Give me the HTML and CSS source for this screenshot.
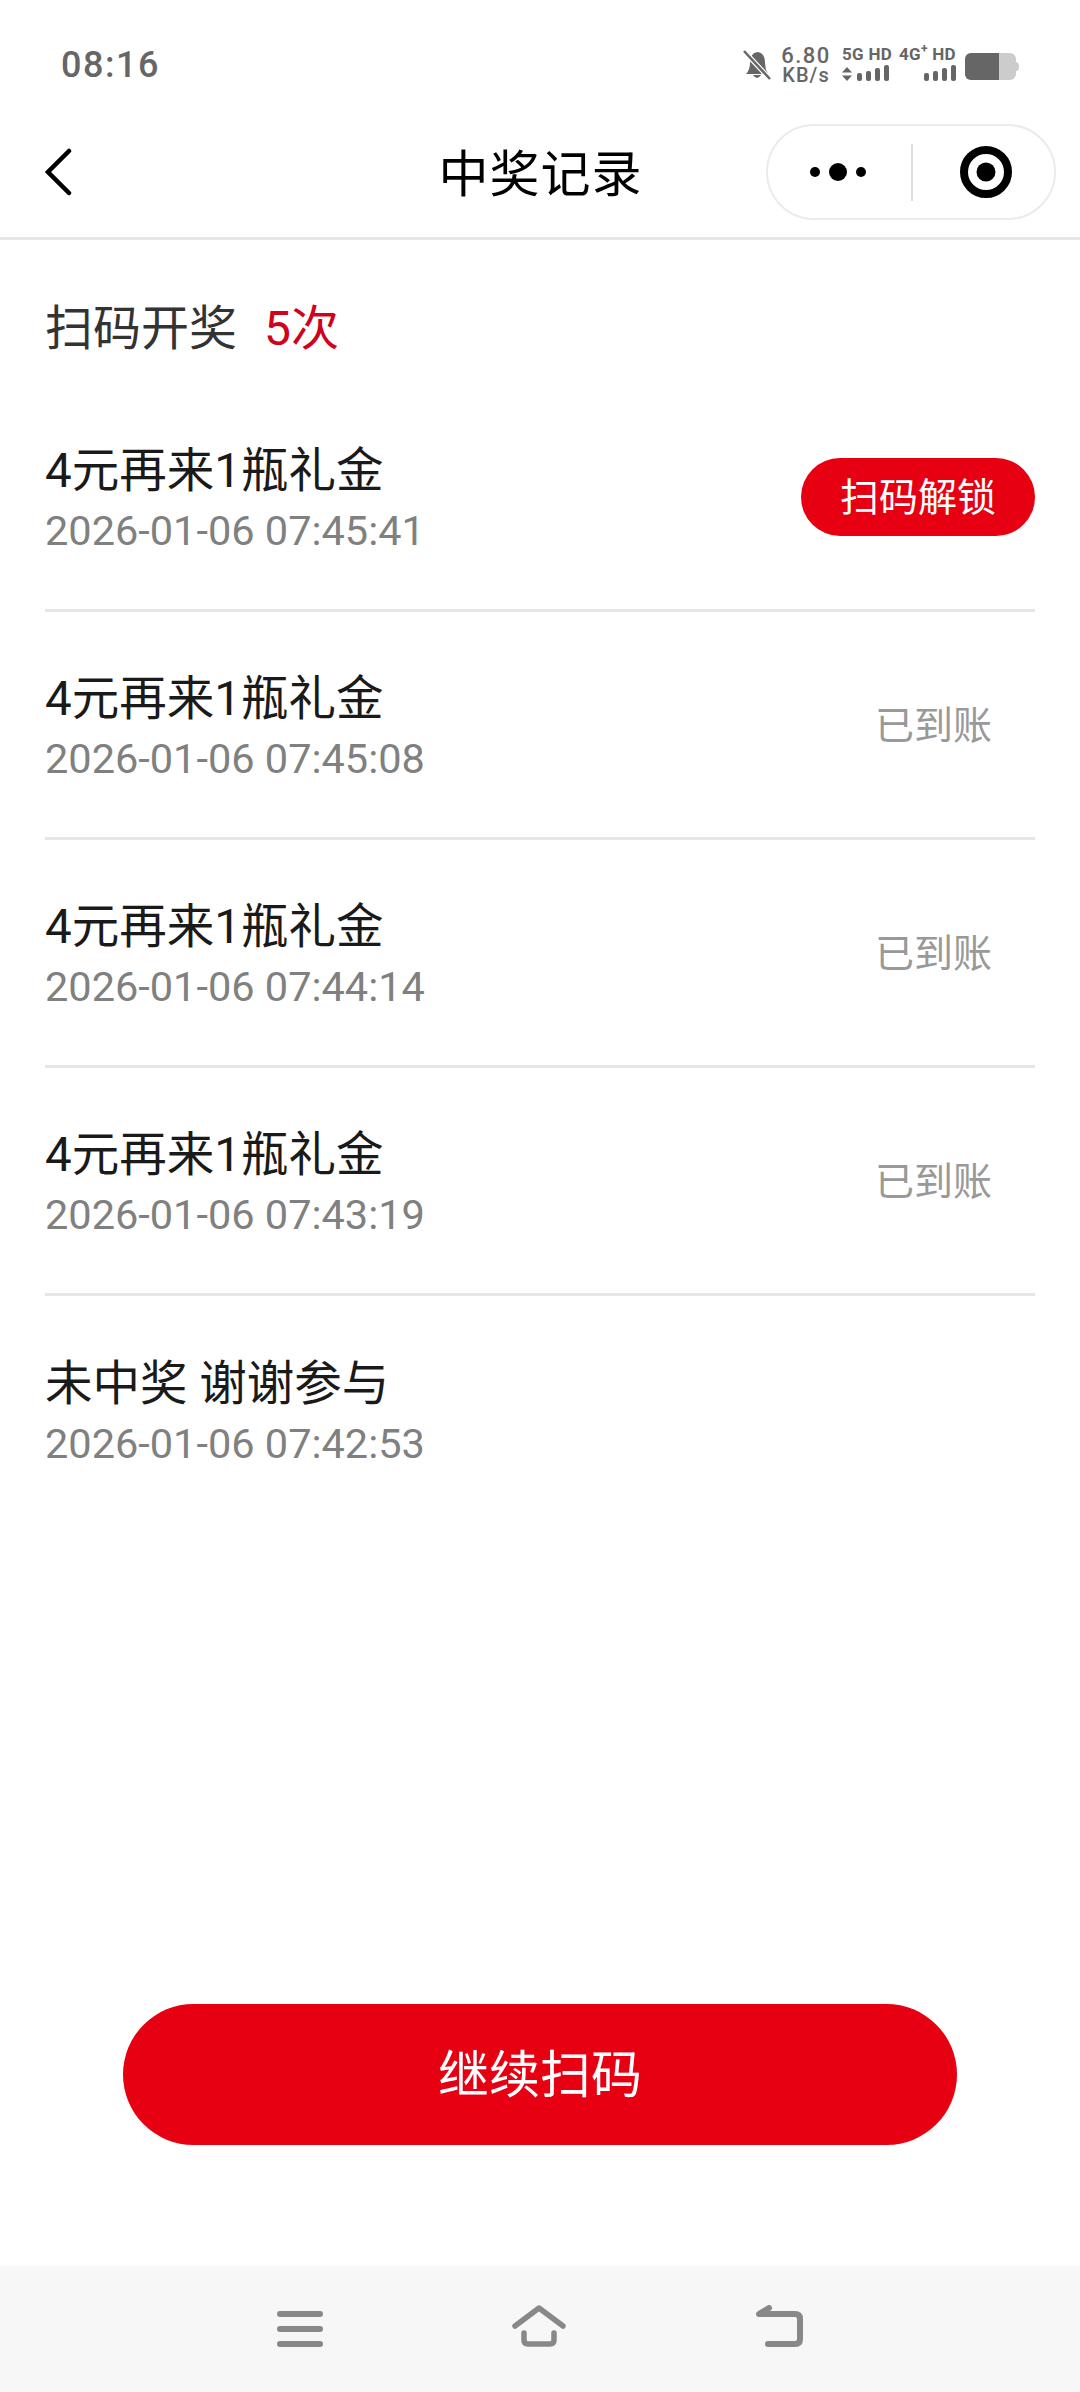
FILE: index.html
```html
<!DOCTYPE html>
<html lang="zh">
<head>
    <title>中奖记录</title>
    <meta charset="utf-8">
    <meta name="viewport" content="width=device-width, initial-scale=1.0">
    <link rel="stylesheet" href="styles.css">
</head>
<body>
    <div class="status-bar">
        <span class="status-time">08:16</span>
        <div class="status-icons">
            <svg class="icon-bell" width="28" height="32" viewBox="0 0 28 32">
                <path d="M3 25 Q7 21 7 14 Q7 4 14.500 3 Q22 4 22 14 Q22 20 25 25 Z" fill="#666"/>
                <path d="M10 26 Q14 32 18 26 Z" fill="#666"/>
                <path d="M0 1 L26 29" stroke="#fff" stroke-width="5"/>
                <path d="M1 2 L27 30" stroke="#666" stroke-width="2.500"/>
            </svg>
            <div class="net-speed">
                <span class="net-speed-num">6.80</span>
                <span class="net-speed-unit">KB/s</span>
            </div>
            <div class="sim sim-first">
                <span class="sim-label">5G HD</span>
                <div class="sim-signal">
                    <svg width="10" height="14" viewBox="0 0 10 14">
                        <path d="M5 0 L10 5.500 L0 5.500 Z M5 14 L10 8.500 L0 8.500 Z" fill="#666"/>
                    </svg>
                    <i class="bar bar-1"></i><i class="bar bar-2"></i><i class="bar bar-3"></i><i class="bar bar-4"></i>
                </div>
            </div>
            <div class="sim sim-second">
                <span class="sim-label">4G<sup>+</sup> HD</span>
                <div class="sim-signal">
                    <i class="bar bar-1"></i><i class="bar bar-2"></i><i class="bar bar-3"></i><i class="bar bar-4"></i>
                </div>
            </div>
            <svg class="icon-battery" width="55" height="28" viewBox="0 0 55 28">
                <rect x="0" y="0" width="51" height="27" rx="6" fill="#ccc"/>
                <path d="M6 0 H34 V27 H6 A6 6 0 0 1 0 21 V6 A6 6 0 0 1 6 0 Z" fill="#666"/>
                <path d="M51 9 Q54 9 54 13.500 Q54 18 51 18 Z" fill="#ccc"/>
            </svg>
        </div>
    </div>

    <div class="nav-bar">
        <div class="nav-back">
            <svg width="28" height="48" viewBox="0 0 28 48">
                <path d="M24 3 L3 24 L24 45" fill="none" stroke="#000" stroke-width="4.500" stroke-linecap="round"/>
            </svg>
        </div>
        <h1 class="nav-title">中奖记录</h1>
        <div class="capsule">
            <div class="capsule-more">
                <i class="dot"></i><i class="dot dot-big"></i><i class="dot"></i>
            </div>
            <div class="capsule-close">
                <svg width="52" height="52" viewBox="0 0 52 52">
                    <circle cx="26" cy="26" r="22" fill="none" stroke="#000" stroke-width="8"/>
                    <circle cx="26" cy="26" r="9.500" fill="#000"/>
                </svg>
            </div>
        </div>
    </div>

    <div class="content">
        <div class="summary">扫码开奖<span class="summary-count">5次</span></div>

        <div class="record">
            <div class="record-info">
                <div class="record-name">4元再来1瓶礼金</div>
                <div class="record-time">2026-01-06 07:45:41</div>
            </div>
            <div class="unlock-btn">扫码解锁</div>
        </div>
        <div class="record">
            <div class="record-info">
                <div class="record-name">4元再来1瓶礼金</div>
                <div class="record-time">2026-01-06 07:45:08</div>
            </div>
            <div class="record-state">已到账</div>
        </div>
        <div class="record">
            <div class="record-info">
                <div class="record-name">4元再来1瓶礼金</div>
                <div class="record-time">2026-01-06 07:44:14</div>
            </div>
            <div class="record-state">已到账</div>
        </div>
        <div class="record">
            <div class="record-info">
                <div class="record-name">4元再来1瓶礼金</div>
                <div class="record-time">2026-01-06 07:43:19</div>
            </div>
            <div class="record-state">已到账</div>
        </div>
        <div class="record">
            <div class="record-info">
                <div class="record-name">未中奖 谢谢参与</div>
                <div class="record-time">2026-01-06 07:42:53</div>
            </div>
        </div>
    </div>

    <div class="footer">
        <div class="continue-btn">继续扫码</div>
    </div>

    <div class="system-nav">
        <svg width="46" height="38" viewBox="0 0 46 38">
            <path d="M3 4 H43 M3 19 H43 M3 34 H43" stroke="#888" stroke-width="6" stroke-linecap="round"/>
        </svg>
        <svg class="system-nav-raised" width="54" height="42" viewBox="0 0 54 42">
            <path d="M3 21 L27 3 L51 21" fill="none" stroke="#888" stroke-width="5.500" stroke-linecap="round" stroke-linejoin="round"/>
            <path d="M12 28 V35 Q12 39 16 39 H38 Q42 39 42 35 V28" fill="none" stroke="#888" stroke-width="5.500" stroke-linecap="round"/>
        </svg>
        <svg class="system-nav-raised" width="48" height="42" viewBox="0 0 48 42">
            <path d="M13 39 H40 Q45 39 45 34 V14 Q45 9 40 9 H4 L14 3" fill="none" stroke="#888" stroke-width="6" stroke-linecap="round" stroke-linejoin="round"/>
        </svg>
    </div>
</body>
</html>
```

FILE: styles.css
```css
* { box-sizing: border-box; }
html, body { margin: 0; padding: 0; }
body { width: 1080px; height: 2392px; display: flex; flex-direction: column; background: #fff; color: #1a1a1a; font-family: "Roboto", "Noto Sans CJK SC", sans-serif; overflow: hidden; }

.status-bar { height: 124px; display: flex; justify-content: space-between; align-items: flex-start; padding: 44px 60px 0 61px; }
.status-time { font-size: 36px; line-height: 42px; font-weight: 500; color: #666; letter-spacing: 1.500px; }
.status-icons { display: flex; align-items: flex-start; color: #666; margin-top: 3px; }
.icon-bell { margin-right: 10px; margin-top: 2px; }
.net-speed { display: flex; flex-direction: column; align-items: center; width: 50px; margin-right: 11px; margin-top: -2px; }
.net-speed-num { font-size: 22px; line-height: 21px; font-weight: 500; letter-spacing: 1.500px; }
.net-speed-unit { font-size: 20px; line-height: 18px; font-weight: 500; letter-spacing: 1px; }
.sim { display: flex; flex-direction: column; margin-top: -2px; }
.sim-first { width: 47px; margin-right: 10px; }
.sim-second { width: 57px; margin-right: 9px; }
.sim-label { font-size: 17px; line-height: 18px; font-weight: 700; white-space: nowrap; letter-spacing: .3px; }
.sim-label sup { font-size: 12px; line-height: 0; }
.sim-signal { display: flex; align-items: flex-end; justify-content: flex-end; gap: 4px; height: 16px; margin-top: 2px; }
.sim-signal svg { margin-right: 1px; }
.bar { display: block; width: 5px; background: #666; border-radius: 2px; }
.bar-1 { height: 8px; }
.bar-2 { height: 10px; }
.bar-3 { height: 13px; }
.bar-4 { height: 16px; }
.icon-battery { margin-top: 6px; }

.nav-bar { height: 116px; flex-shrink: 0; display: grid; grid-template-columns: 1fr auto 1fr; align-items: center; border-bottom: 3px solid #e6e6e6; padding: 0 24px 17px 25px; }
.nav-back { display: flex; align-items: center; padding-left: 20px; }
.nav-title { margin: 5px 0 0; font-size: 50px; line-height: 60px; font-weight: 400; color: #000; letter-spacing: 1px; }
.capsule { justify-self: end; width: 290px; height: 96px; display: flex; align-items: center; border: 2px solid #ebebeb; border-radius: 48px; }
.capsule-more { width: 145px; height: 57px; display: flex; align-items: center; justify-content: flex-end; gap: 9px; padding-right: 45px; border-right: 2px solid #ddd; }
.dot { display: block; width: 10px; height: 10px; background: #000; border-radius: 50%; }
.dot-big { width: 18px; height: 18px; }
.capsule-close { flex: 1; display: flex; justify-content: center; padding-left: 5px; }

.content { flex: 1; padding: 0 45px; }
.summary { font-size: 48px; line-height: 60px; color: #333; margin-top: 59px; margin-bottom: 25px; }
.summary-count { color: #d0021b; margin-left: 27px; }

.record { height: 228px; display: flex; align-items: center; justify-content: space-between; border-bottom: 3px solid #e6e6e6; }
.record:last-child { border-bottom: 0; }
.record-info { padding-top: 5px; }
.record-name { font-size: 47.500px; line-height: 58px; color: #1a1a1a; }
.record-time { font-size: 41.500px; line-height: 52px; color: #808080; margin-top: 5px; }
.unlock-btn { width: 234px; height: 78px; display: flex; align-items: center; justify-content: center; padding-bottom: 5px; background: #e60012; color: #fff; font-size: 39px; border-radius: 39px; }
.record-state { width: 190px; text-align: right; padding-right: 43px; padding-bottom: 5px; font-size: 39px; color: #999; white-space: nowrap; }

.footer { display: flex; justify-content: center; height: 262px; }
.continue-btn { width: 834px; height: 141px; display: flex; align-items: center; justify-content: center; padding-bottom: 8px; background: #e60012; color: #fff; font-size: 51px; border-radius: 71px; }

.system-nav { height: 126px; flex-shrink: 0; display: flex; align-items: center; justify-content: center; gap: 189px; background: #f7f7f7; }
.system-nav-raised { margin-bottom: 6px; }
```
